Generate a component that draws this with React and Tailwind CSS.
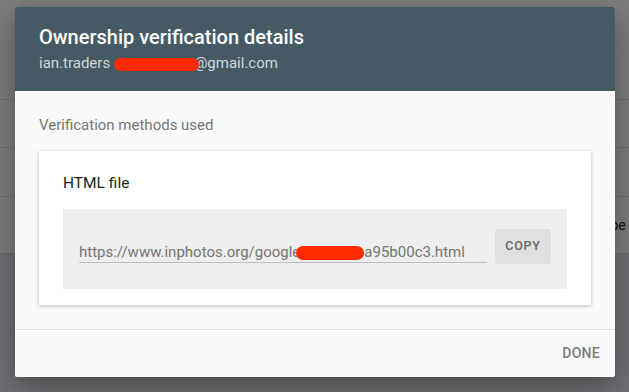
import React from 'react'

const Blob = ({ className }) => (
    <span className={`relative z-10 inline-block rounded-full bg-[#ff2a00] align-middle ${className}`} />
)

const App = () => {
    return (
        <div className="relative h-[392px] w-[629px] overflow-hidden font-['Roboto',sans-serif]">
            {/* page behind the dialog */}
            <div className="flex h-full flex-col">
                <div className="flex h-[253px] flex-col bg-[#fafafa]">
                    <div className="h-[100px] border-b border-[#e0e0e0]" />
                    <div className="h-[48px] border-b border-[#e0e0e0]" />
                    <div className="h-[49px] border-b border-[#e0e0e0]" />
                    <div className="flex h-[56px] items-center pl-[596px] text-[14px] text-[#212121]">Type</div>
                </div>
                <div className="flex-1 border-t border-[#d0d0d0] bg-[#dfe1e6]" />
            </div>
            <div className="absolute inset-0 bg-black/50" />

            {/* dialog */}
            <div className="absolute left-[15px] top-[7px] flex w-[600px] flex-col rounded-[2px] bg-[#fafafa] shadow-[0_10px_30px_rgba(0,0,0,0.35)]">
                <div className="rounded-t-[2px] bg-[#455a64] px-6 pb-[18px] pt-4">
                    <h2 className="text-[20px] font-medium leading-7 text-white">Ownership verification details</h2>
                    <p className="mt-[2px] whitespace-nowrap text-[15px] leading-5 text-[#cfd8dc]">
                        ian.traders <Blob className="-mr-[5px] h-[13px] w-[85px]" />@gmail.com
                    </p>
                </div>

                <div className="px-6 pb-6 pt-6">
                    <p className="text-[15px] leading-5 text-[#757575]">Verification methods used</p>
                    <div className="mt-4 bg-white px-6 pb-4 pt-5 shadow-[0_1px_4px_rgba(0,0,0,0.25)]">
                        <p className="text-[15.5px] leading-6 text-[#212121]">HTML file</p>
                        <div className="mt-[14px] flex h-[80px] items-start gap-2 bg-[#eeeeee] px-4 pt-5">
                            <div className="mt-[13px] flex-1 overflow-hidden whitespace-nowrap border-b border-[#bdbdbd] text-[15px] leading-5 text-[#757575]">
                                https://www.inphotos.org/google<Blob className="-ml-[4px] h-[14px] w-[68px]" />a95b00c3.html
                            </div>
                            <button className="h-[35px] w-[56px] rounded-[2px] bg-[#e0e0e0] text-[12.5px] font-medium tracking-[0.06em] text-[#666666]">
                                COPY
                            </button>
                        </div>
                    </div>
                </div>

                <div className="flex h-[48px] items-center justify-end border-t border-[#e0e0e0] pr-[15px]">
                    <button className="text-[14px] font-medium tracking-[0.02em] text-[#7a7a7a]">DONE</button>
                </div>
            </div>
        </div>
    )
}

export default App
